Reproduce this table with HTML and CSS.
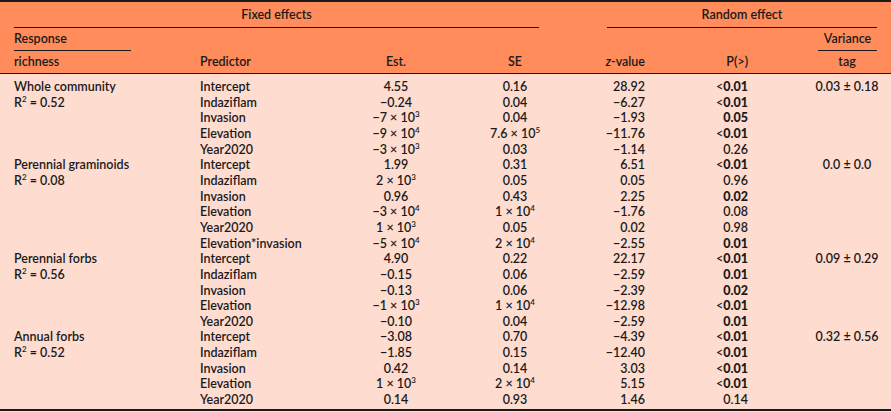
FILE: index.html
```html
<!DOCTYPE html>
<html>
<head>
<meta charset="utf-8">
<link rel="stylesheet" href="styles.css">
</head>
<body>
<table class="tbl">
<colgroup>
<col class="w1"><col class="w2"><col class="w3"><col class="w4"><col class="w5"><col class="w6"><col class="w7">
</colgroup>
<thead>
<tr class="h1">
<th colspan="4" class="fixed"><div class="rule">Fixed effects</div></th>
<th colspan="3" class="random"><div class="rule">Random effect</div></th>
</tr>
<tr class="h2">
<th class="c1"><div class="rule resp">Response</div></th>
<th></th><th></th><th></th><th></th><th></th>
<th class="c7"><div class="rule var">Variance</div></th>
</tr>
<tr class="h3">
<th class="c1">richness</th>
<th class="c2">Predictor</th>
<th class="c3">Est.</th>
<th class="c4">SE</th>
<th class="c5"><i>z</i>-value</th>
<th class="c6">P(&gt;)</th>
<th class="c7">tag</th>
</tr>
</thead>
<tbody>
<tr class="first"><td class="c1">Whole community</td><td class="c2">Intercept</td><td class="c3">4.55</td><td class="c4">0.16</td><td class="c5">28.92</td><td class="c6">&lt;<b>0.01</b></td><td class="c7">0.03 ± 0.18</td></tr>
<tr><td class="c1">R<sup>2</sup> = 0.52</td><td class="c2">Indaziflam</td><td class="c3">−0.24</td><td class="c4">0.04</td><td class="c5">−6.27</td><td class="c6">&lt;<b>0.01</b></td><td class="c7"></td></tr>
<tr><td class="c1"></td><td class="c2">Invasion</td><td class="c3">−7 × 10<sup>3</sup></td><td class="c4">0.04</td><td class="c5">−1.93</td><td class="c6"><b>0.05</b></td><td class="c7"></td></tr>
<tr><td class="c1"></td><td class="c2">Elevation</td><td class="c3">−9 × 10<sup>4</sup></td><td class="c4">7.6 × 10<sup>5</sup></td><td class="c5">−11.76</td><td class="c6">&lt;<b>0.01</b></td><td class="c7"></td></tr>
<tr><td class="c1"></td><td class="c2">Year2020</td><td class="c3">−3 × 10<sup>3</sup></td><td class="c4">0.03</td><td class="c5">−1.14</td><td class="c6">0.26</td><td class="c7"></td></tr>
<tr><td class="c1">Perennial graminoids</td><td class="c2">Intercept</td><td class="c3">1.99</td><td class="c4">0.31</td><td class="c5">6.51</td><td class="c6">&lt;<b>0.01</b></td><td class="c7">0.0 ± 0.0</td></tr>
<tr><td class="c1">R<sup>2</sup> = 0.08</td><td class="c2">Indaziflam</td><td class="c3">2 × 10<sup>3</sup></td><td class="c4">0.05</td><td class="c5">0.05</td><td class="c6">0.96</td><td class="c7"></td></tr>
<tr><td class="c1"></td><td class="c2">Invasion</td><td class="c3">0.96</td><td class="c4">0.43</td><td class="c5">2.25</td><td class="c6"><b>0.02</b></td><td class="c7"></td></tr>
<tr><td class="c1"></td><td class="c2">Elevation</td><td class="c3">−3 × 10<sup>4</sup></td><td class="c4">1 × 10<sup>4</sup></td><td class="c5">−1.76</td><td class="c6">0.08</td><td class="c7"></td></tr>
<tr><td class="c1"></td><td class="c2">Year2020</td><td class="c3">1 × 10<sup>3</sup></td><td class="c4">0.05</td><td class="c5">0.02</td><td class="c6">0.98</td><td class="c7"></td></tr>
<tr><td class="c1"></td><td class="c2">Elevation*invasion</td><td class="c3">−5 × 10<sup>4</sup></td><td class="c4">2 × 10<sup>4</sup></td><td class="c5">−2.55</td><td class="c6"><b>0.01</b></td><td class="c7"></td></tr>
<tr><td class="c1">Perennial forbs</td><td class="c2">Intercept</td><td class="c3">4.90</td><td class="c4">0.22</td><td class="c5">22.17</td><td class="c6">&lt;<b>0.01</b></td><td class="c7">0.09 ± 0.29</td></tr>
<tr><td class="c1">R<sup>2</sup> = 0.56</td><td class="c2">Indaziflam</td><td class="c3">−0.15</td><td class="c4">0.06</td><td class="c5">−2.59</td><td class="c6"><b>0.01</b></td><td class="c7"></td></tr>
<tr><td class="c1"></td><td class="c2">Invasion</td><td class="c3">−0.13</td><td class="c4">0.06</td><td class="c5">−2.39</td><td class="c6"><b>0.02</b></td><td class="c7"></td></tr>
<tr><td class="c1"></td><td class="c2">Elevation</td><td class="c3">−1 × 10<sup>3</sup></td><td class="c4">1 × 10<sup>4</sup></td><td class="c5">−12.98</td><td class="c6">&lt;<b>0.01</b></td><td class="c7"></td></tr>
<tr><td class="c1"></td><td class="c2">Year2020</td><td class="c3">−0.10</td><td class="c4">0.04</td><td class="c5">−2.59</td><td class="c6"><b>0.01</b></td><td class="c7"></td></tr>
<tr><td class="c1">Annual forbs</td><td class="c2">Intercept</td><td class="c3">−3.08</td><td class="c4">0.70</td><td class="c5">−4.39</td><td class="c6">&lt;<b>0.01</b></td><td class="c7">0.32 ± 0.56</td></tr>
<tr><td class="c1">R<sup>2</sup> = 0.52</td><td class="c2">Indaziflam</td><td class="c3">−1.85</td><td class="c4">0.15</td><td class="c5">−12.40</td><td class="c6">&lt;<b>0.01</b></td><td class="c7"></td></tr>
<tr><td class="c1"></td><td class="c2">Invasion</td><td class="c3">0.42</td><td class="c4">0.14</td><td class="c5">3.03</td><td class="c6">&lt;<b>0.01</b></td><td class="c7"></td></tr>
<tr><td class="c1"></td><td class="c2">Elevation</td><td class="c3">1 × 10<sup>3</sup></td><td class="c4">2 × 10<sup>4</sup></td><td class="c5">5.15</td><td class="c6">&lt;<b>0.01</b></td><td class="c7"></td></tr>
<tr class="last"><td class="c1"></td><td class="c2">Year2020</td><td class="c3">0.14</td><td class="c4">0.93</td><td class="c5">1.46</td><td class="c6">0.14</td><td class="c7"></td></tr>
</tbody>
</table>
</body>
</html>
```

FILE: styles.css
```css
html, body {
  margin: 0;
  padding: 0;
  background: #fedcd0;
}
.tbl {
  width: 891px;
  table-layout: fixed;
  border-collapse: collapse;
  font-family: Lato, "Open Sans", sans-serif;
  font-weight: 600;
  font-size: 12.5px;
  line-height: 15.65px;
  color: #1a1a1a;
  border-top: 2px solid #1a1a1a;
  border-bottom: 2px solid #1a1a1a;
}
.w1 { width: 193px; }
.w2 { width: 147px; }
.w3 { width: 112px; }
.w4 { width: 126px; }
.w5 { width: 74px; }
.w6 { width: 103px; }
.w7 { width: 136px; }
thead {
  background: #ff8c5a;
}
th {
  font-weight: 600;
  padding: 0;
  white-space: nowrap;
}
td {
  padding: 0;
  white-space: nowrap;
}
.h1 th { padding-top: 5px; padding-bottom: 0; }
.h1 .rule { padding-bottom: 4px; border-bottom: 1px solid #1a1a1a; text-align: center; }
.fixed { padding-left: 14px !important; padding-right: 39px !important; }
.random { padding-left: 29px !important; padding-right: 14px !important; }
.h2 th { padding-top: 3px; padding-bottom: 0; }
.h2 .rule { padding-bottom: 4px; border-bottom: 1px solid #1a1a1a; }
.resp { width: 117px; text-align: left; }
.var { width: 59px; margin-left: 15px; text-align: center; }
.h3 th { padding-top: 3px; padding-bottom: 3px; border-bottom: 1px solid #1a1a1a; }
.c1 { text-align: left; padding-left: 14px; }
.c2 { text-align: left; padding-left: 7px; }
.c3 { text-align: center; }
.c4 { text-align: center; }
.c5 { text-align: right; padding-right: 7px; }
.c6 { text-align: right; padding-right: 7px; }
.c7 { text-align: center; padding-left: 48px; }
.h2 .c7 { text-align: left; }
.first td { padding-top: 5px; }
.last td { padding-bottom: 1px; }
b { font-weight: 900; }
sup {
  font-size: 8px;
  line-height: 0;
  vertical-align: 5px;
}
i { font-style: italic; }
```
